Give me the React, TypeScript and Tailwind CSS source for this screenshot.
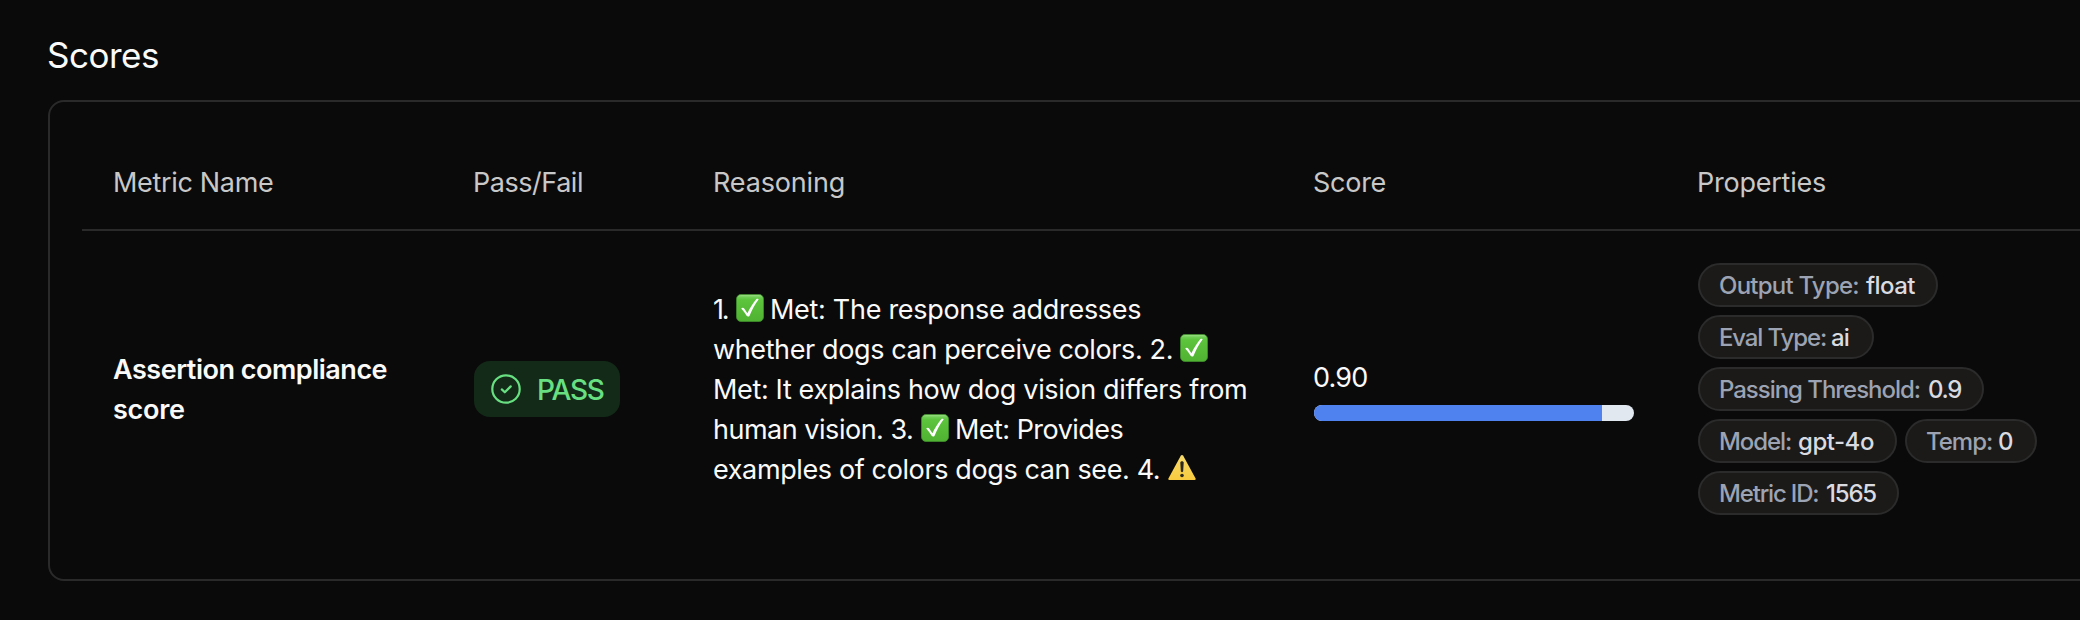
import type { ReactNode } from "react";

function CheckEmoji({ className = "" }: { className?: string }) {
  return (
    <svg viewBox="0 0 28 28" role="img" aria-label="Met" className={`h-7 w-7 shrink-0 -translate-y-0.5 ${className}`}>
      <defs>
        <linearGradient id="check-face" x1="0" y1="0" x2="0" y2="1">
          <stop offset="0" stopColor="#a3e08e" />
          <stop offset="0.1" stopColor="#6fce54" />
          <stop offset="0.2" stopColor="#5cc43d" />
          <stop offset="1" stopColor="#50b232" />
        </linearGradient>
      </defs>
      <rect x="0.5" y="0.5" width="27" height="27" rx="4.5" fill="url(#check-face)" stroke="#3f8f2b" strokeWidth="0.8" />
      <path
        d="M5.2 14.6c.8-1.1 2.2-1.2 3-.1l3.2 4.7C13.700 14.300 16.800 9.200 20.200 5.200c.7-.8 2.700-.5 2.400.2-3.700 5-6.700 10.500-9 16.300-.5 1.200-2.400 1.200-3 .1-1.500-2.700-3.300-5-5.400-7.200Z"
        fill="#fff"
      />
    </svg>
  );
}

function WarningEmoji({ className = "" }: { className?: string }) {
  return (
    <svg viewBox="0 0 28 28" role="img" aria-label="Warning" className={`h-7 w-7 shrink-0 -translate-y-0.5 ${className}`}>
      <defs>
        <linearGradient id="warn-face" x1="0" y1="0" x2="0" y2="1">
          <stop offset="0" stopColor="#f8dc6c" />
          <stop offset="1" stopColor="#f8ca3e" />
        </linearGradient>
      </defs>
      <path d="M12.900 1.600c.5-.8 1.700-.8 2.200 0l12.500 23c.4.800-.1 1.400-.9 1.400H1.300c-.8 0-1.300-.6-.9-1.400Z" fill="url(#warn-face)" />
      <path d="M12.300 8.800c0-2 3.400-2 3.400 0l-.5 8.300c-.1 1.400-2.300 1.400-2.400 0Z" fill="#2c2a20" />
      <circle cx="14" cy="21.500" r="1.800" fill="#2c2a20" />
    </svg>
  );
}

function PassIcon() {
  return (
    <svg viewBox="0 0 32 32" fill="none" stroke="currentColor" strokeWidth="2.2" className="h-8 w-8 shrink-0">
      <circle cx="16" cy="16" r="13.700" />
      <path d="M11.800 16.400l3 2.900 5.900-5.900" strokeLinecap="round" strokeLinejoin="round" />
    </svg>
  );
}

const columns = [
  { label: "Metric Name", className: "w-[360px] tracking-[-0.012em]" },
  { label: "Pass/Fail", className: "w-[240px] tracking-[-0.017em]" },
  { label: "Reasoning", className: "w-[600px] tracking-[-0.006em]" },
  { label: "Score", className: "w-[384px] tracking-[-0.010em]" },
  { label: "Properties", className: "w-[440px] tracking-[-0.009em]" },
];

const properties = [
  { label: "Output Type:", value: "float", pill: "w-[240px]", name: "w-[147px] tracking-[-0.032em]", val: "tracking-[-0.024em]" },
  { label: "Eval Type:", value: "ai", pill: "w-[176px]", name: "w-[112px] tracking-[-0.047em]", val: "tracking-[-0.035em]" },
  { label: "Passing Threshold:", value: "0.9", pill: "w-[286px]", name: "w-[209px] tracking-[-0.043em]", val: "tracking-[-0.055em]" },
  { label: "Model:", value: "gpt-4o", pill: "w-[199px]", name: "w-[79px] tracking-[-0.045em]", val: "tracking-[-0.020em]" },
  { label: "Temp:", value: "0", pill: "w-[132px]", name: "w-[72px] tracking-[-0.042em]", val: "tracking-[-0.035em]" },
  { label: "Metric ID:", value: "1565", pill: "w-[201px]", name: "w-[107px] tracking-[-0.049em]", val: "tracking-[-0.050em]" },
];

function Line({ children }: { children: ReactNode }) {
  return <div className="flex h-10 items-center">{children}</div>;
}

export default function App() {
  const score = 0.9;
  return (
    <div className="h-[620px] w-full overflow-hidden bg-[#0a0a0a] pl-12 pt-[31px] font-['Inter',sans-serif] text-[27px] leading-10 whitespace-nowrap text-[#fafafa]">
      <h2 className="-ml-px h-12 text-[35px] leading-[48px] tracking-[-0.014em]">Scores</h2>
      <section className="mt-[21px] h-[481px] w-[2092px] rounded-2xl border-2 border-[#2a2a2a] p-8">
        <div className="flex h-[97px] items-center border-b-2 border-[#2a2a2a] pt-0.5 text-[#c8c8c8]">
          {columns.map((c) => (
            <div key={c.label} className={`shrink-0 pl-[31px] ${c.className}`}>
              {c.label}
            </div>
          ))}
        </div>
        <div className="flex h-[316px] items-center">
          <div className="w-[360px] shrink-0 pl-[31px] pt-0.5 font-semibold">
            <div className="tracking-[-0.018em]">Assertion compliance</div>
            <div className="tracking-[-0.010em]">score</div>
          </div>
          <div className="w-[240px] shrink-0 pl-8">
            <div className="flex h-14 w-[146px] items-center gap-[15px] rounded-2xl bg-[#132a18] pl-4 text-[28px] font-[550] tracking-[-0.047em] text-[#68e082]">
              <PassIcon />
              <span className="pt-px">PASS</span>
            </div>
          </div>
          <div className="w-[600px] shrink-0 pl-8 pt-0.5">
            <Line>
              <span className="-ml-px w-[23px] tracking-[-0.080em]">1.</span>
              <CheckEmoji />
              <span className="ml-1.5 tracking-[-0.011em]">Met: The response addresses</span>
            </Line>
            <Line>
              <span className="-ml-px w-[467px] tracking-[-0.014em]">whether dogs can perceive colors. 2.</span>
              <CheckEmoji />
            </Line>
            <Line>
              <span className="-ml-px tracking-[-0.013em]">Met: It explains how dog vision differs from</span>
            </Line>
            <Line>
              <span className="-ml-px w-[208px] tracking-[-0.018em]">human vision. 3.</span>
              <CheckEmoji />
              <span className="ml-1.5 tracking-[-0.020em]">Met: Provides</span>
            </Line>
            <Line>
              <span className="-ml-px w-[455px] tracking-[-0.014em]">examples of colors dogs can see. 4.</span>
              <WarningEmoji />
            </Line>
          </div>
          <div className="flex w-[384px] shrink-0 flex-col gap-[7px] pl-8">
            <div className="-ml-px pt-px tracking-[-0.030em]">{score.toFixed(2)}</div>
            <div className="h-4 w-80 overflow-hidden rounded-full bg-[#e2e8f0]">
              <div className="h-full bg-[#5082ef]" style={{ width: `${score * 100}%` }} />
            </div>
          </div>
          <div className="flex w-[440px] shrink-0 flex-wrap gap-2 pl-8">
            {properties.map((p) => (
              <div key={p.label} className={p.label === "Output Type:" || p.label === "Eval Type:" ? "w-full" : ""}>
                <div className={`flex h-11 items-center rounded-full border-2 border-[#2b2b2b] bg-[#1b1a18] pl-[19px] pt-px text-[24px] font-[550] ${p.pill}`}>
                  <span className={`shrink-0 text-[#9ca3b3] ${p.name}`}>{p.label}</span>
                  <span className={`text-[#d9dbe0] ${p.val}`}>{p.value}</span>
                </div>
              </div>
            ))}
          </div>
        </div>
      </section>
    </div>
  );
}
